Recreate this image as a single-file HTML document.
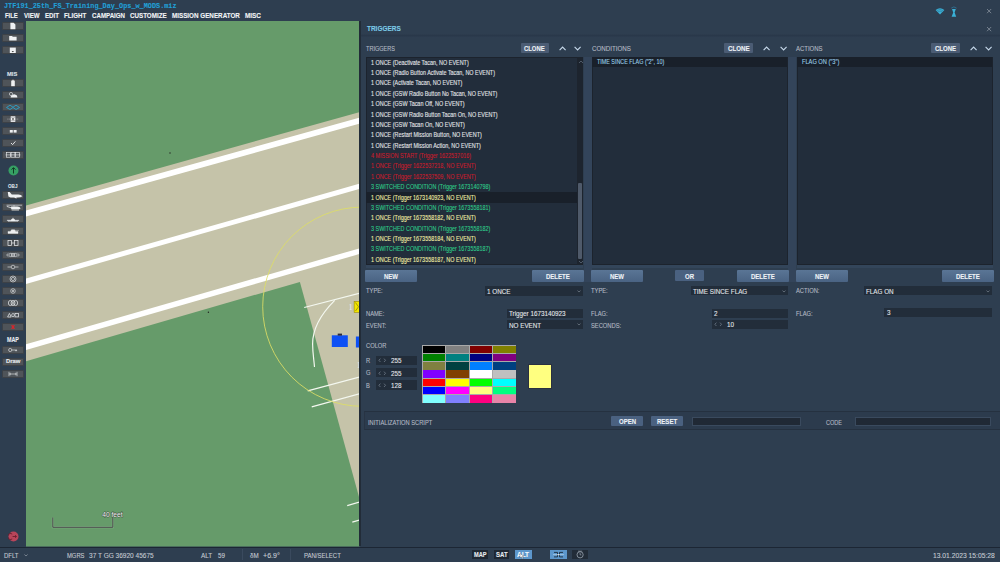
<!DOCTYPE html><html><head><meta charset="utf-8"><style>
html,body{margin:0;padding:0;width:1000px;height:562px;overflow:hidden;background:#2e3e50}
.t{position:absolute;white-space:nowrap;line-height:1;transform-origin:0 0;-webkit-text-stroke:0.1px currentColor}
.b{position:absolute;box-sizing:border-box}
</style></head><body>
<div class="b" style="left:0.00px;top:0.00px;width:1000.00px;height:562.00px;background:#2e3e50;"></div>
<div class="t" style="left:3.60px;top:2.21px;font-size:7.879px;color:#22a0d8;font-family:'Liberation Mono',monospace;transform:scaleX(0.8712);font-weight:bold;">JTF191_25th_FS_Training_Day_Ops_w_MODS.miz</div>
<div class="t" style="left:5.40px;top:12.50px;font-size:6.857px;color:#f2f4f6;font-family:'Liberation Sans',sans-serif;font-weight:bold;transform:scaleX(0.8616);">FILE</div>
<div class="t" style="left:23.60px;top:12.50px;font-size:6.857px;color:#f2f4f6;font-family:'Liberation Sans',sans-serif;font-weight:bold;transform:scaleX(0.8902);">VIEW</div>
<div class="t" style="left:44.60px;top:12.50px;font-size:6.857px;color:#f2f4f6;font-family:'Liberation Sans',sans-serif;font-weight:bold;transform:scaleX(0.9027);">EDIT</div>
<div class="t" style="left:64.10px;top:12.50px;font-size:6.857px;color:#f2f4f6;font-family:'Liberation Sans',sans-serif;font-weight:bold;transform:scaleX(0.9008);">FLIGHT</div>
<div class="t" style="left:91.80px;top:12.50px;font-size:6.857px;color:#f2f4f6;font-family:'Liberation Sans',sans-serif;font-weight:bold;transform:scaleX(0.8989);">CAMPAIGN</div>
<div class="t" style="left:130.30px;top:12.50px;font-size:6.857px;color:#f2f4f6;font-family:'Liberation Sans',sans-serif;font-weight:bold;transform:scaleX(0.9116);">CUSTOMIZE</div>
<div class="t" style="left:172.00px;top:12.50px;font-size:6.857px;color:#f2f4f6;font-family:'Liberation Sans',sans-serif;font-weight:bold;transform:scaleX(0.9184);">MISSION GENERATOR</div>
<div class="t" style="left:245.00px;top:12.50px;font-size:6.857px;color:#f2f4f6;font-family:'Liberation Sans',sans-serif;font-weight:bold;transform:scaleX(0.9333);">MISC</div>
<svg class="b" style="left:0;top:0" width="1000" height="562" viewBox="0 0 1000 562">
<defs><clipPath id="mc"><rect x="26" y="21" width="333.5" height="525.6"/></clipPath></defs>
<g clip-path="url(#mc)">
<rect x="26" y="21" width="334" height="525" fill="#c5c3a9"/>
<polygon points="20,10 370,10 370,109.1 20,207.1" fill="#669b6a"/>
<polygon points="20,362.9 299.9,281.9 376.4,560 20,560" fill="#669b6a"/>
<polygon points="20,212.2 370,114.6 370,120.7 20,218.1" fill="#ffffff"/>
<polygon points="20,280.3 370,180.7 370,185.8 20,285.6" fill="#ffffff"/>
<polygon points="20,346.0 370,245.3 370,251.0 20,351.6" fill="#ffffff"/>
<g stroke="#f4f8f0" stroke-width="1.2" fill="none">
<line x1="304.2" y1="307.5" x2="362" y2="292.5"/>
<line x1="307.7" y1="390.8" x2="362" y2="376.4"/>
<line x1="311.7" y1="406.8" x2="362" y2="393"/>
<line x1="347.2" y1="505.6" x2="362" y2="501.3"/>
<line x1="352.3" y1="522.2" x2="362" y2="519.4"/>
<path d="M334.7,300.3 C322,313 312.5,328 312.6,344 C312.7,354 314,360 314.5,367"/>
</g>
<circle cx="362.3" cy="306.7" r="99.6" fill="none" stroke="#dede66" stroke-width="0.85"/>
<rect x="331.8" y="335.3" width="16" height="11.7" fill="#0d50f5"/>
<rect x="337.7" y="333.6" width="4.3" height="2" fill="#2a2a40"/>
<rect x="355.9" y="336.5" width="8" height="11" fill="#0d50f5"/>
<rect x="354.1" y="301.3" width="8" height="11.1" fill="#f2e600" stroke="#8a7a00" stroke-width="0.5"/>
<path d="M355.5,302.5 L358.5,306.8 L355.5,311" stroke="#5a5000" stroke-width="0.5" fill="none"/>
<text x="348.8" y="310.2" font-family="Liberation Serif" font-size="7.2" fill="#f0f0f0">1</text>
<text x="357" y="367.8" font-family="Liberation Serif" font-size="7.2" fill="#f0f0f0">1</text>
<circle cx="170" cy="153" r="0.7" fill="#222"/>
<circle cx="208.4" cy="312.3" r="0.7" fill="#222"/>
<path d="M52.8,517.5 V527.3 H112.8 V517.5" fill="none" stroke="#7fae84" stroke-width="2"/><path d="M52.8,517.5 V527.3 H112.8 V517.5" fill="none" stroke="#4c4c4c" stroke-width="1"/>
<text x="102.2" y="516.6" font-family="Liberation Sans" font-size="6.3" fill="#f4f4f4" stroke="#3a4a3a" stroke-width="0.8" paint-order="stroke" textLength="20.5" lengthAdjust="spacingAndGlyphs">40 feet</text>
</g></svg>
<div class="b" style="left:2.00px;top:21.50px;width:22.00px;height:8.00px;background:#4f5459;border-radius:1px;border:0.5px solid #3d4146;"></div>
<svg class="b" style="left:2px;top:21.5px" width="22" height="8" viewBox="0 0 22 8"><path d="M8.4,0.7 H11.6 L13.4,2.5 V7.2 H8.4 Z" fill="#eef0f2"/></svg>
<div class="b" style="left:2.00px;top:33.50px;width:22.00px;height:8.00px;background:#4f5459;border-radius:1px;border:0.5px solid #3d4146;"></div>
<svg class="b" style="left:2px;top:33.5px" width="22" height="8" viewBox="0 0 22 8"><path d="M7.2,2 H10 L10.8,2.8 H14.6 V6.5 H7.2 Z" fill="#eef0f2"/></svg>
<div class="b" style="left:2.00px;top:45.50px;width:22.00px;height:8.00px;background:#4f5459;border-radius:1px;border:0.5px solid #3d4146;"></div>
<svg class="b" style="left:2px;top:45.5px" width="22" height="8" viewBox="0 0 22 8"><path d="M7.8,1.6 H13.8 V7 H7.8 Z" fill="#eef0f2"/><path d="M9.6,5 H12 L10.8,6.3 Z" fill="#333"/></svg>
<div class="t" style="left:7.00px;top:71.89px;font-size:5.714px;color:#dde2e8;font-family:'Liberation Sans',sans-serif;font-weight:bold;transform:scaleX(1.0138);">MIS</div>
<div class="b" style="left:2.00px;top:78.80px;width:22.00px;height:8.00px;background:#4f5459;border-radius:1px;border:0.5px solid #3d4146;"></div>
<svg class="b" style="left:2px;top:78.8px" width="22" height="8" viewBox="0 0 22 8"><path d="M9.2,1.6 H12.8 V7.2 H9.2 Z" fill="#eef0f2"/><rect x="10.2" y="0.8" width="1.6" height="1" fill="#eef0f2"/></svg>
<div class="b" style="left:2.00px;top:90.80px;width:22.00px;height:8.00px;background:#4f5459;border-radius:1px;border:0.5px solid #3d4146;"></div>
<svg class="b" style="left:2px;top:90.8px" width="22" height="8" viewBox="0 0 22 8"><circle cx="9" cy="3" r="1.6" fill="none" stroke="#eef0f2" stroke-width="0.6"/><path d="M8.6,6.6 Q8.4,4.2 10.6,4 Q12,2.4 13.6,3.8 Q15.4,3.8 15.4,6.6 Z" fill="#eef0f2"/></svg>
<div class="b" style="left:2.00px;top:102.80px;width:22.00px;height:8.00px;background:#4f5459;border-radius:1px;border:0.5px solid #3d4146;"></div>
<svg class="b" style="left:2px;top:102.8px" width="22" height="8" viewBox="0 0 22 8"><path d="M4.5,4.5 L8,2.2 L11,4.2 L14,2.2 L17.5,4.5 L14,6.5 L11,4.5 L8,6.5 Z" fill="none" stroke="#2aa0c8" stroke-width="0.9"/></svg>
<div class="b" style="left:2.00px;top:114.80px;width:22.00px;height:8.00px;background:#4f5459;border-radius:1px;border:0.5px solid #3d4146;"></div>
<svg class="b" style="left:2px;top:114.8px" width="22" height="8" viewBox="0 0 22 8"><rect x="8.7" y="1.3" width="4.6" height="5.6" fill="#eef0f2"/><path d="M9.8,2.3 L12.2,5.9 M12.2,2.3 L9.8,5.9" stroke="#333" stroke-width="0.6"/><path d="M5.5,4.1 H8.5 M13.5,4.1 H16.5" stroke="#eef0f2" stroke-width="0.5" stroke-dasharray="0.8 0.6"/></svg>
<div class="b" style="left:2.00px;top:126.80px;width:22.00px;height:8.00px;background:#4f5459;border-radius:1px;border:0.5px solid #3d4146;"></div>
<svg class="b" style="left:2px;top:126.8px" width="22" height="8" viewBox="0 0 22 8"><rect x="7.8" y="3" width="3" height="2.6" fill="#eef0f2"/><rect x="11.6" y="3" width="3" height="2.6" fill="#eef0f2"/></svg>
<div class="b" style="left:2.00px;top:138.80px;width:22.00px;height:8.00px;background:#4f5459;border-radius:1px;border:0.5px solid #3d4146;"></div>
<svg class="b" style="left:2px;top:138.8px" width="22" height="8" viewBox="0 0 22 8"><path d="M9,4 L10.6,5.6 L13.4,2.4" fill="none" stroke="#eef0f2" stroke-width="0.9"/></svg>
<div class="b" style="left:2.00px;top:150.80px;width:22.00px;height:8.00px;background:#4f5459;border-radius:1px;border:0.5px solid #3d4146;"></div>
<svg class="b" style="left:2px;top:150.8px" width="22" height="8" viewBox="0 0 22 8"><g fill="none" stroke="#eef0f2" stroke-width="0.6"><rect x="4.6" y="1.6" width="3.8" height="4.6"/><rect x="9.1" y="1.6" width="3.8" height="4.6"/><rect x="13.6" y="1.6" width="3.8" height="4.6"/><path d="M3.6,3.9 H18.4"/></g></svg>
<svg class="b" style="left:7.5px;top:165.2px" width="11" height="11" viewBox="0 0 11 11"><circle cx="5.5" cy="5.5" r="5" fill="#36a064"/><path d="M5.5,8.5 V3 M3.6,4.6 L5.5,2.6 L7.4,4.6" stroke="#0f3a22" stroke-width="1" fill="none"/></svg>
<div class="t" style="left:8.00px;top:182.64px;font-size:6.000px;color:#dde2e8;font-family:'Liberation Sans',sans-serif;font-weight:bold;transform:scaleX(0.7700);">OBJ</div>
<div class="b" style="left:2.00px;top:191.00px;width:22.00px;height:8.00px;background:#4f5459;border-radius:1px;border:0.5px solid #3d4146;"></div>
<svg class="b" style="left:2px;top:191px" width="22" height="8" viewBox="0 0 22 8"><path d="M5.8,0.9 H7.6 L9.8,3.6 H16.4 Q19.2,4 20.4,5.2 Q18.8,6.4 15.4,6.4 H8.6 L6.4,5.6 Z" fill="#eef0f2"/><path d="M11,5.2 L13.6,7.2 H15 L13.6,5.2 Z" fill="#eef0f2"/></svg>
<div class="b" style="left:2.00px;top:203.00px;width:22.00px;height:8.00px;background:#4f5459;border-radius:1px;border:0.5px solid #3d4146;"></div>
<svg class="b" style="left:2px;top:203px" width="22" height="8" viewBox="0 0 22 8"><path d="M4.6,2.2 H20" stroke="#eef0f2" stroke-width="0.6"/><path d="M12,2.2 V3.6" stroke="#eef0f2" stroke-width="0.6"/><path d="M9.2,3.6 H15.4 Q18,3.8 18.6,5.4 Q17.2,6.6 14.2,6.6 H9.6 Q8.4,5 9.2,3.6 Z" fill="#eef0f2"/><path d="M4.8,3.4 L9.2,4.8" stroke="#eef0f2" stroke-width="0.8"/><path d="M9.6,7.3 H17" stroke="#eef0f2" stroke-width="0.5"/></svg>
<div class="b" style="left:2.00px;top:215.00px;width:22.00px;height:8.00px;background:#4f5459;border-radius:1px;border:0.5px solid #3d4146;"></div>
<svg class="b" style="left:2px;top:215px" width="22" height="8" viewBox="0 0 22 8"><path d="M5,5.2 H17 L16,6.2 H6 Z M9,5.2 L10,3.8 H12 L13,5.2 Z M11,3.8 V2.6" stroke="#eef0f2" stroke-width="0.4" fill="#eef0f2"/></svg>
<div class="b" style="left:2.00px;top:227.00px;width:22.00px;height:8.00px;background:#4f5459;border-radius:1px;border:0.5px solid #3d4146;"></div>
<svg class="b" style="left:2px;top:227px" width="22" height="8" viewBox="0 0 22 8"><path d="M6,4.4 H16 V6.4 H6 Z M8.6,4.4 L9.5,2.8 H12.6 L13.4,4.4 Z M12.6,3.4 H17" stroke="#eef0f2" stroke-width="0.4" fill="#eef0f2"/></svg>
<div class="b" style="left:2.00px;top:239.00px;width:22.00px;height:8.00px;background:#4f5459;border-radius:1px;border:0.5px solid #3d4146;"></div>
<svg class="b" style="left:2px;top:239px" width="22" height="8" viewBox="0 0 22 8"><g fill="none" stroke="#eef0f2" stroke-width="0.7"><rect x="6" y="1.5" width="3.6" height="5"/><rect x="12.4" y="1.5" width="3.6" height="5"/><path d="M9.6,4 H12.4"/></g></svg>
<div class="b" style="left:2.00px;top:251.00px;width:22.00px;height:8.00px;background:#4f5459;border-radius:1px;border:0.5px solid #3d4146;"></div>
<svg class="b" style="left:2px;top:251px" width="22" height="8" viewBox="0 0 22 8"><g fill="none" stroke="#eef0f2" stroke-width="0.6"><path d="M4.6,4 L6.4,2.4 M4.6,4 L6.4,5.6 M17.4,4 L15.6,2.4 M17.4,4 L15.6,5.6"/><ellipse cx="8.6" cy="4" rx="1.8" ry="1.6"/><ellipse cx="11" cy="4" rx="1.8" ry="1.6"/><ellipse cx="13.4" cy="4" rx="1.8" ry="1.6"/></g></svg>
<div class="b" style="left:2.00px;top:263.00px;width:22.00px;height:8.00px;background:#4f5459;border-radius:1px;border:0.5px solid #3d4146;"></div>
<svg class="b" style="left:2px;top:263px" width="22" height="8" viewBox="0 0 22 8"><g fill="none" stroke="#eef0f2" stroke-width="0.6"><path d="M5.5,4 H9 M13,4 H16.5"/><circle cx="11" cy="4" r="1.8"/></g></svg>
<div class="b" style="left:2.00px;top:275.00px;width:22.00px;height:8.00px;background:#4f5459;border-radius:1px;border:0.5px solid #3d4146;"></div>
<svg class="b" style="left:2px;top:275px" width="22" height="8" viewBox="0 0 22 8"><g fill="none" stroke="#eef0f2" stroke-width="0.6"><circle cx="11" cy="4" r="3"/><circle cx="11" cy="4" r="1.6"/></g></svg>
<div class="b" style="left:2.00px;top:287.00px;width:22.00px;height:8.00px;background:#4f5459;border-radius:1px;border:0.5px solid #3d4146;"></div>
<svg class="b" style="left:2px;top:287px" width="22" height="8" viewBox="0 0 22 8"><g fill="none" stroke="#eef0f2" stroke-width="0.6"><circle cx="11" cy="4" r="2.3"/><path d="M10,3 L12,5 M12,3 L10,5"/></g></svg>
<div class="b" style="left:2.00px;top:299.00px;width:22.00px;height:8.00px;background:#4f5459;border-radius:1px;border:0.5px solid #3d4146;"></div>
<svg class="b" style="left:2px;top:299px" width="22" height="8" viewBox="0 0 22 8"><g fill="none" stroke="#eef0f2" stroke-width="0.7"><ellipse cx="8.4" cy="4" rx="2" ry="2.6"/><ellipse cx="11" cy="4" rx="2" ry="2.6"/><ellipse cx="13.6" cy="4" rx="2" ry="2.6"/></g></svg>
<div class="b" style="left:2.00px;top:311.00px;width:22.00px;height:8.00px;background:#4f5459;border-radius:1px;border:0.5px solid #3d4146;"></div>
<svg class="b" style="left:2px;top:311px" width="22" height="8" viewBox="0 0 22 8"><g fill="none" stroke="#eef0f2" stroke-width="0.7"><path d="M5.6,6 L7.4,2.4 L9.2,6 Z"/><path d="M11,2.2 L12.6,4.1 L11,6 L9.4,4.1 Z"/><rect x="13" y="2.5" width="3.4" height="3.4"/></g></svg>
<div class="b" style="left:2.00px;top:323.00px;width:22.00px;height:8.00px;background:#4f5459;border-radius:1px;border:0.5px solid #3d4146;"></div>
<svg class="b" style="left:2px;top:323px" width="22" height="8" viewBox="0 0 22 8"><path d="M9.6,2.2 L12.4,5.8 M12.4,2.2 L9.6,5.8" stroke="#d8262c" stroke-width="1.3"/></svg>
<div class="t" style="left:7.00px;top:337.49px;font-size:6.286px;color:#e8ecf0;font-family:'Liberation Sans',sans-serif;font-weight:bold;transform:scaleX(0.8591);">MAP</div>
<div class="b" style="left:2.00px;top:345.50px;width:22.00px;height:8.00px;background:#4f5459;border-radius:1px;border:0.5px solid #3d4146;"></div>
<svg class="b" style="left:2px;top:345.5px" width="22" height="8" viewBox="0 0 22 8"><g fill="none" stroke="#eef0f2" stroke-width="0.6"><circle cx="8.2" cy="4" r="1.6"/><path d="M9.8,4 H15 M13.6,4 V5.2 M14.6,4 V5.2"/></g></svg>
<div class="b" style="left:2.00px;top:357.50px;width:22.00px;height:8.00px;background:#4f5459;border-radius:1px;border:0.5px solid #3d4146;"></div>
<div class="b" style="left:2.00px;top:369.50px;width:22.00px;height:8.00px;background:#4f5459;border-radius:1px;border:0.5px solid #3d4146;"></div>
<svg class="b" style="left:2px;top:369.5px" width="22" height="8" viewBox="0 0 22 8"><g fill="none" stroke="#eef0f2" stroke-width="0.6"><path d="M7,1.8 V6.2 M15,1.8 V6.2 M7.6,4 H14.4 M8.8,3 L7.6,4 L8.8,5 M13.2,3 L14.4,4 L13.2,5"/></g></svg>
<div class="t" style="left:5.80px;top:358.69px;font-size:5.714px;color:#e8ecf0;font-family:'Liberation Sans',sans-serif;font-weight:bold;transform:scaleX(1.0305);">Draw</div>
<svg class="b" style="left:7.5px;top:530.5px" width="11" height="11" viewBox="0 0 11 11"><circle cx="5.5" cy="5.5" r="5" fill="#b8455a"/><path d="M4.2,3 A3,3 0 1 0 4.2,8 M4.6,5.5 H8.4 M7,4.2 L8.4,5.5 L7,6.8" stroke="#6a1d2c" stroke-width="0.9" fill="none"/></svg>
<div class="b" style="left:0.00px;top:546.60px;width:1000.00px;height:15.40px;background:#2e3e50;border-top:1.2px solid #1c2634;"></div>
<div class="t" style="left:4.20px;top:551.68px;font-size:7.000px;color:#c4cad2;font-family:'Liberation Sans',sans-serif;transform:scaleX(0.8539);">DFLT</div>
<div class="t" style="left:66.50px;top:551.68px;font-size:7.000px;color:#c4cad2;font-family:'Liberation Sans',sans-serif;transform:scaleX(0.8333);">MGRS</div>
<div class="t" style="left:88.60px;top:551.68px;font-size:7.000px;color:#c4cad2;font-family:'Liberation Sans',sans-serif;transform:scaleX(0.9321);">37 T GG 36920 45675</div>
<div class="t" style="left:200.60px;top:551.68px;font-size:7.000px;color:#c4cad2;font-family:'Liberation Sans',sans-serif;transform:scaleX(0.9092);">ALT</div>
<div class="t" style="left:218.00px;top:551.68px;font-size:7.000px;color:#c4cad2;font-family:'Liberation Sans',sans-serif;transform:scaleX(0.8990);">59</div>
<div class="t" style="left:250.30px;top:551.68px;font-size:7.000px;color:#c4cad2;font-family:'Liberation Sans',sans-serif;transform:scaleX(0.8943);">δM</div>
<div class="t" style="left:263.20px;top:551.68px;font-size:7.000px;color:#c4cad2;font-family:'Liberation Sans',sans-serif;transform:scaleX(1.0109);">+6.9°</div>
<div class="t" style="left:303.80px;top:551.68px;font-size:7.000px;color:#c4cad2;font-family:'Liberation Sans',sans-serif;transform:scaleX(0.8548);">PAN/SELECT</div>
<div class="t" style="left:933.20px;top:551.68px;font-size:7.000px;color:#c4cad2;font-family:'Liberation Sans',sans-serif;transform:scaleX(0.9622);">13.01.2023 15:05:28</div>
<svg class="b" style="left:23.5px;top:553.5px" width="4" height="3"><path d="M0.4,0.5 L2,2 L3.6,0.5" stroke="#a8b0ba" stroke-width="0.6" fill="none"/></svg>
<div class="b" style="left:242.00px;top:549.00px;width:0.70px;height:11.00px;background:#3a4a5e;"></div>
<div class="b" style="left:290.30px;top:549.00px;width:0.70px;height:11.00px;background:#3a4a5e;"></div>
<div class="b" style="left:472.00px;top:549.70px;width:15.80px;height:9.30px;background:#1f2833;"></div>
<div class="t" style="left:473.80px;top:551.53px;font-size:6.714px;color:#e8ecf0;font-family:'Liberation Sans',sans-serif;font-weight:bold;transform:scaleX(0.8445);">MAP</div>
<div class="b" style="left:493.90px;top:549.70px;width:14.80px;height:9.30px;background:#1f2833;"></div>
<div class="t" style="left:495.60px;top:551.53px;font-size:6.714px;color:#e8ecf0;font-family:'Liberation Sans',sans-serif;font-weight:bold;transform:scaleX(0.8971);">SAT</div>
<div class="b" style="left:515.00px;top:549.70px;width:16.60px;height:9.30px;background:#5d97cc;"></div>
<div class="t" style="left:517.40px;top:551.53px;font-size:6.714px;color:#f4f8fc;font-family:'Liberation Sans',sans-serif;font-weight:bold;transform:scaleX(0.9559);">ALT</div>
<svg class="b" style="left:519px;top:553px" width="6" height="6"><path d="M1,0.5 L1,5 L2.2,3.8 L3.4,5.8 L4.2,5.4 L3.2,3.4 L4.8,3.2 Z" fill="#fff" stroke="#222" stroke-width="0.3"/></svg>
<div class="b" style="left:549.50px;top:549.70px;width:17.00px;height:9.30px;background:#5d97cc;"></div>
<svg class="b" style="left:549.5px;top:549.7px" width="17" height="9.3" viewBox="0 0 17 9.3"><path d="M4,2.4 H7.5 V6.9 H4 M13,2.4 H9.5 V6.9 H13" stroke="#1a2a3a" stroke-width="0.9" fill="none"/><path d="M7.5,4.65 H9.5" stroke="#fff" stroke-width="0.8"/><path d="M3,4.65 H14" stroke="#e8f0f8" stroke-width="0.5"/></svg>
<div class="b" style="left:571.60px;top:549.70px;width:16.20px;height:9.30px;background:#222c38;"></div>
<svg class="b" style="left:571.6px;top:549.7px" width="16.2" height="9.3" viewBox="0 0 16.2 9.3"><circle cx="8.1" cy="4.8" r="3.1" fill="none" stroke="#aab4c0" stroke-width="0.7"/><path d="M8.1,3 V4.9 H9.4" stroke="#aab4c0" stroke-width="0.6" fill="none"/><path d="M6,1.2 H10.2" stroke="#aab4c0" stroke-width="0.6"/></svg>
<div class="b" style="left:359.00px;top:21.00px;width:641.00px;height:525.00px;background:#2e3e50;"></div>
<div class="b" style="left:359.40px;top:21.00px;width:1.30px;height:525.00px;background:#222c38;"></div>
<div class="t" style="left:367.20px;top:25.41px;font-size:7.429px;color:#7ccbe8;font-family:'Liberation Sans',sans-serif;font-weight:bold;transform:scaleX(0.8712);">TRIGGERS</div>
<div class="b" style="left:361.00px;top:34.20px;width:639.00px;height:4.30px;background:linear-gradient(#2e3d4f,#29384a 40%,#2f3f52);"></div>
<svg class="b" style="left:985.6px;top:8.0px" width="6.2" height="6.2"><path d="M1,1 L5.2,5.2 M5.2,1 L1,5.2" stroke="#8c96a2" stroke-width="0.75"/></svg>
<svg class="b" style="left:986.1999999999999px;top:25.599999999999998px" width="6.2" height="6.2"><path d="M1,1 L5.2,5.2 M5.2,1 L1,5.2" stroke="#8c96a2" stroke-width="0.75"/></svg>
<div class="t" style="left:365.50px;top:45.55px;font-size:6.571px;color:#b4bac4;font-family:'Liberation Sans',sans-serif;transform:scaleX(0.8450);">TRIGGERS</div>
<div class="b" style="left:520.50px;top:43.30px;width:28.50px;height:10.20px;background:#4b5c74;border-radius:1px;"></div>
<div class="t" style="left:524.30px;top:45.66px;font-size:7.143px;color:#eef2f6;font-family:'Liberation Sans',sans-serif;font-weight:bold;transform:scaleX(0.8280);">CLONE</div>
<svg class="b" style="left:559px;top:46px" width="8" height="5"><path d="M0.6,4.2 L3.6,1 L6.6,4.2" stroke="#c6d8ea" stroke-width="1.1" fill="none"/></svg>
<svg class="b" style="left:574px;top:46px" width="8" height="5"><path d="M0.6,0.8 L3.6,4 L6.6,0.8" stroke="#c6d8ea" stroke-width="1.1" fill="none"/></svg>
<div class="t" style="left:592.00px;top:45.55px;font-size:6.571px;color:#b4bac4;font-family:'Liberation Sans',sans-serif;transform:scaleX(0.9453);">CONDITIONS</div>
<div class="b" style="left:724.00px;top:43.30px;width:29.40px;height:10.20px;background:#4b5c74;border-radius:1px;"></div>
<div class="t" style="left:727.80px;top:45.66px;font-size:7.143px;color:#eef2f6;font-family:'Liberation Sans',sans-serif;font-weight:bold;transform:scaleX(0.8640);">CLONE</div>
<svg class="b" style="left:763.4px;top:46px" width="8" height="5"><path d="M0.6,4.2 L3.6,1 L6.6,4.2" stroke="#c6d8ea" stroke-width="1.1" fill="none"/></svg>
<svg class="b" style="left:779.8px;top:46px" width="8" height="5"><path d="M0.6,0.8 L3.6,4 L6.6,0.8" stroke="#c6d8ea" stroke-width="1.1" fill="none"/></svg>
<div class="t" style="left:796.00px;top:45.55px;font-size:6.571px;color:#b4bac4;font-family:'Liberation Sans',sans-serif;transform:scaleX(0.9072);">ACTIONS</div>
<div class="b" style="left:930.70px;top:43.30px;width:29.00px;height:10.20px;background:#4b5c74;border-radius:1px;"></div>
<div class="t" style="left:934.50px;top:45.66px;font-size:7.143px;color:#eef2f6;font-family:'Liberation Sans',sans-serif;font-weight:bold;transform:scaleX(0.8480);">CLONE</div>
<svg class="b" style="left:970px;top:46px" width="8" height="5"><path d="M0.6,4.2 L3.6,1 L6.6,4.2" stroke="#c6d8ea" stroke-width="1.1" fill="none"/></svg>
<svg class="b" style="left:985px;top:46px" width="8" height="5"><path d="M0.6,0.8 L3.6,4 L6.6,0.8" stroke="#c6d8ea" stroke-width="1.1" fill="none"/></svg>
<div class="b" style="left:583.50px;top:56.50px;width:8.30px;height:225.50px;background:#33445a;"></div>
<div class="b" style="left:788.00px;top:56.50px;width:8.00px;height:225.50px;background:#33445a;"></div>
<div class="b" style="left:365.50px;top:56.70px;width:217.80px;height:208.10px;background:#222d3b;border:0.6px solid #1c232d;"></div>
<div class="b" style="left:591.80px;top:56.70px;width:196.00px;height:208.10px;background:#222d3b;border:0.6px solid #1c232d;"></div>
<div class="b" style="left:796.50px;top:56.70px;width:196.50px;height:208.10px;background:#222d3b;border:0.6px solid #1c232d;"></div>
<div class="b" style="left:365.50px;top:264.80px;width:217.80px;height:2.80px;background:#33455a;"></div>
<div class="b" style="left:591.80px;top:264.80px;width:196.00px;height:2.80px;background:#33455a;"></div>
<div class="b" style="left:796.50px;top:264.80px;width:196.50px;height:2.80px;background:#33455a;"></div>
<div class="b" style="left:577.30px;top:57.00px;width:5.70px;height:207.50px;background:#1d242e;"></div>
<div class="b" style="left:577.80px;top:182.50px;width:4.40px;height:76.00px;background:#4f5a6a;border-radius:1px;"></div>
<svg class="b" style="left:577.5px;top:59.5px" width="6" height="4"><path d="M1,3 L3,1 L5,3" stroke="#5c6878" stroke-width="0.8" fill="none"/></svg>
<svg class="b" style="left:577.5px;top:259.5px" width="6" height="4"><path d="M1,1 L3,3 L5,1" stroke="#5c6878" stroke-width="0.8" fill="none"/></svg>
<div class="t" style="left:371.20px;top:59.69px;font-size:6.286px;color:#e4e6ea;font-family:'Liberation Sans',sans-serif;transform:scaleX(0.8668);">1 ONCE (Deactivate Tacan, NO EVENT)</div>
<div class="t" style="left:371.20px;top:70.06px;font-size:6.286px;color:#e4e6ea;font-family:'Liberation Sans',sans-serif;transform:scaleX(0.8668);">1 ONCE (Radio Button Activate Tacan, NO EVENT)</div>
<div class="t" style="left:371.20px;top:80.43px;font-size:6.286px;color:#e4e6ea;font-family:'Liberation Sans',sans-serif;transform:scaleX(0.8668);">1 ONCE (Activate Tacan, NO EVENT)</div>
<div class="t" style="left:371.20px;top:90.80px;font-size:6.286px;color:#e4e6ea;font-family:'Liberation Sans',sans-serif;transform:scaleX(0.8668);">1 ONCE (GSW Radio Button No Tacan, NO EVENT)</div>
<div class="t" style="left:371.20px;top:101.17px;font-size:6.286px;color:#e4e6ea;font-family:'Liberation Sans',sans-serif;transform:scaleX(0.8668);">1 ONCE (GSW Tacan Off, NO EVENT)</div>
<div class="t" style="left:371.20px;top:111.54px;font-size:6.286px;color:#e4e6ea;font-family:'Liberation Sans',sans-serif;transform:scaleX(0.8668);">1 ONCE (GSW Radio Button Tacan On, NO EVENT)</div>
<div class="t" style="left:371.20px;top:121.91px;font-size:6.286px;color:#e4e6ea;font-family:'Liberation Sans',sans-serif;transform:scaleX(0.8668);">1 ONCE (GSW Tacan On, NO EVENT)</div>
<div class="t" style="left:371.20px;top:132.28px;font-size:6.286px;color:#e4e6ea;font-family:'Liberation Sans',sans-serif;transform:scaleX(0.8668);">1 ONCE (Restart Mission Button, NO EVENT)</div>
<div class="t" style="left:371.20px;top:142.65px;font-size:6.286px;color:#e4e6ea;font-family:'Liberation Sans',sans-serif;transform:scaleX(0.8668);">1 ONCE (Restart Mission Action, NO EVENT)</div>
<div class="t" style="left:371.20px;top:153.02px;font-size:6.286px;color:#c81c2c;font-family:'Liberation Sans',sans-serif;transform:scaleX(0.8668);">4 MISSION START (Trigger 1622537016)</div>
<div class="t" style="left:371.20px;top:163.39px;font-size:6.286px;color:#c81c2c;font-family:'Liberation Sans',sans-serif;transform:scaleX(0.8668);">1 ONCE (Trigger 1622537218, NO EVENT)</div>
<div class="t" style="left:371.20px;top:173.76px;font-size:6.286px;color:#c81c2c;font-family:'Liberation Sans',sans-serif;transform:scaleX(0.8668);">1 ONCE (Trigger 1622537509, NO EVENT)</div>
<div class="t" style="left:371.20px;top:184.13px;font-size:6.286px;color:#2fcb8a;font-family:'Liberation Sans',sans-serif;transform:scaleX(0.8668);">3 SWITCHED CONDITION (Trigger 1673140798)</div>
<div class="b" style="left:366.00px;top:192.41px;width:211.00px;height:10.30px;background:#19202a;"></div>
<div class="t" style="left:371.20px;top:194.50px;font-size:6.286px;color:#f3efa6;font-family:'Liberation Sans',sans-serif;transform:scaleX(0.8668);">1 ONCE (Trigger 1673140923, NO EVENT)</div>
<div class="t" style="left:371.20px;top:204.87px;font-size:6.286px;color:#2fcb8a;font-family:'Liberation Sans',sans-serif;transform:scaleX(0.8668);">3 SWITCHED CONDITION (Trigger 1673558181)</div>
<div class="t" style="left:371.20px;top:215.24px;font-size:6.286px;color:#f3efa6;font-family:'Liberation Sans',sans-serif;transform:scaleX(0.8668);">1 ONCE (Trigger 1673558182, NO EVENT)</div>
<div class="t" style="left:371.20px;top:225.61px;font-size:6.286px;color:#2fcb8a;font-family:'Liberation Sans',sans-serif;transform:scaleX(0.8668);">3 SWITCHED CONDITION (Trigger 1673558182)</div>
<div class="t" style="left:371.20px;top:235.98px;font-size:6.286px;color:#f3efa6;font-family:'Liberation Sans',sans-serif;transform:scaleX(0.8668);">1 ONCE (Trigger 1673558184, NO EVENT)</div>
<div class="t" style="left:371.20px;top:246.35px;font-size:6.286px;color:#2fcb8a;font-family:'Liberation Sans',sans-serif;transform:scaleX(0.8668);">3 SWITCHED CONDITION (Trigger 1673558187)</div>
<div class="t" style="left:371.20px;top:256.72px;font-size:6.286px;color:#f3efa6;font-family:'Liberation Sans',sans-serif;transform:scaleX(0.8668);">1 ONCE (Trigger 1673558187, NO EVENT)</div>
<div class="b" style="left:591.60px;top:57.20px;width:195.60px;height:9.80px;background:#19202a;"></div>
<div class="t" style="left:596.50px;top:59.29px;font-size:6.286px;color:#9ccfe6;font-family:'Liberation Sans',sans-serif;transform:scaleX(0.8597);">TIME SINCE FLAG ("2", 10)</div>
<div class="b" style="left:797.10px;top:57.20px;width:195.30px;height:9.80px;background:#19202a;"></div>
<div class="t" style="left:801.50px;top:59.29px;font-size:6.286px;color:#9ccfe6;font-family:'Liberation Sans',sans-serif;transform:scaleX(0.9040);">FLAG ON ("3")</div>
<div class="b" style="left:365.00px;top:269.50px;width:52.00px;height:12.50px;background:linear-gradient(#5a7595,#4a6383);border-radius:1px;"></div>
<div class="t" style="left:383.98px;top:272.73px;font-size:7.000px;color:#eef2f6;font-family:'Liberation Sans',sans-serif;font-weight:bold;transform:scaleX(0.8600);">NEW</div>
<div class="b" style="left:532.00px;top:269.50px;width:52.00px;height:12.50px;background:linear-gradient(#5a7595,#4a6383);border-radius:1px;"></div>
<div class="t" style="left:546.13px;top:272.73px;font-size:7.000px;color:#eef2f6;font-family:'Liberation Sans',sans-serif;font-weight:bold;transform:scaleX(0.8600);">DELETE</div>
<div class="b" style="left:590.60px;top:269.50px;width:52.10px;height:12.50px;background:linear-gradient(#5a7595,#4a6383);border-radius:1px;"></div>
<div class="t" style="left:609.63px;top:272.73px;font-size:7.000px;color:#eef2f6;font-family:'Liberation Sans',sans-serif;font-weight:bold;transform:scaleX(0.8600);">NEW</div>
<div class="b" style="left:675.00px;top:270.30px;width:29.30px;height:10.60px;background:#4a6180;border-radius:1px;"></div>
<div class="t" style="left:685.13px;top:272.58px;font-size:7.000px;color:#eef2f6;font-family:'Liberation Sans',sans-serif;font-weight:bold;transform:scaleX(0.8600);">OR</div>
<div class="b" style="left:736.90px;top:269.50px;width:52.10px;height:12.50px;background:linear-gradient(#5a7595,#4a6383);border-radius:1px;"></div>
<div class="t" style="left:751.08px;top:272.73px;font-size:7.000px;color:#eef2f6;font-family:'Liberation Sans',sans-serif;font-weight:bold;transform:scaleX(0.8600);">DELETE</div>
<div class="b" style="left:796.20px;top:269.50px;width:51.60px;height:12.50px;background:linear-gradient(#5a7595,#4a6383);border-radius:1px;"></div>
<div class="t" style="left:814.98px;top:272.73px;font-size:7.000px;color:#eef2f6;font-family:'Liberation Sans',sans-serif;font-weight:bold;transform:scaleX(0.8600);">NEW</div>
<div class="b" style="left:941.50px;top:269.50px;width:52.10px;height:12.50px;background:linear-gradient(#5a7595,#4a6383);border-radius:1px;"></div>
<div class="t" style="left:955.68px;top:272.73px;font-size:7.000px;color:#eef2f6;font-family:'Liberation Sans',sans-serif;font-weight:bold;transform:scaleX(0.8600);">DELETE</div>
<div class="t" style="left:366.00px;top:288.35px;font-size:6.571px;color:#b4bac4;font-family:'Liberation Sans',sans-serif;transform:scaleX(0.8800);">TYPE:</div>
<div class="b" style="left:484.90px;top:285.70px;width:98.50px;height:10.30px;background:#222d3a;"></div>
<div class="t" style="left:487.10px;top:287.73px;font-size:7.000px;color:#e2e6ea;font-family:'Liberation Sans',sans-serif;transform:scaleX(0.9000);">1 ONCE</div>
<svg class="b" style="left:577.1999999999999px;top:289.55px" width="4" height="3"><path d="M0.5,0.6 L2,2 L3.5,0.6" stroke="#8a94a0" stroke-width="0.6" fill="none"/></svg>
<div class="t" style="left:366.00px;top:311.05px;font-size:6.571px;color:#b4bac4;font-family:'Liberation Sans',sans-serif;transform:scaleX(0.8800);">NAME:</div>
<div class="b" style="left:506.50px;top:308.50px;width:76.90px;height:9.80px;background:#222d3a;"></div>
<div class="t" style="left:508.70px;top:310.28px;font-size:7.000px;color:#e2e6ea;font-family:'Liberation Sans',sans-serif;transform:scaleX(0.9000);">Trigger 1673140923</div>
<div class="t" style="left:366.00px;top:322.85px;font-size:6.571px;color:#b4bac4;font-family:'Liberation Sans',sans-serif;transform:scaleX(0.8800);">EVENT:</div>
<div class="b" style="left:506.50px;top:320.00px;width:76.90px;height:9.40px;background:#222d3a;"></div>
<div class="t" style="left:508.70px;top:321.58px;font-size:7.000px;color:#e2e6ea;font-family:'Liberation Sans',sans-serif;transform:scaleX(0.9000);">NO EVENT</div>
<svg class="b" style="left:577.1999999999999px;top:323.4px" width="4" height="3"><path d="M0.5,0.6 L2,2 L3.5,0.6" stroke="#8a94a0" stroke-width="0.6" fill="none"/></svg>
<div class="t" style="left:591.00px;top:288.35px;font-size:6.571px;color:#b4bac4;font-family:'Liberation Sans',sans-serif;transform:scaleX(0.8800);">TYPE:</div>
<div class="b" style="left:690.70px;top:286.20px;width:97.50px;height:9.30px;background:#222d3a;"></div>
<div class="t" style="left:692.90px;top:287.73px;font-size:7.000px;color:#e2e6ea;font-family:'Liberation Sans',sans-serif;transform:scaleX(0.9000);">TIME SINCE FLAG</div>
<svg class="b" style="left:782.0px;top:289.55px" width="4" height="3"><path d="M0.5,0.6 L2,2 L3.5,0.6" stroke="#8a94a0" stroke-width="0.6" fill="none"/></svg>
<div class="t" style="left:591.00px;top:310.85px;font-size:6.571px;color:#b4bac4;font-family:'Liberation Sans',sans-serif;transform:scaleX(0.8800);">FLAG:</div>
<div class="b" style="left:712.00px;top:308.60px;width:76.40px;height:9.20px;background:#222d3a;"></div>
<div class="t" style="left:714.20px;top:310.08px;font-size:7.000px;color:#e2e6ea;font-family:'Liberation Sans',sans-serif;transform:scaleX(0.9000);">2</div>
<div class="t" style="left:591.00px;top:322.65px;font-size:6.571px;color:#b4bac4;font-family:'Liberation Sans',sans-serif;transform:scaleX(0.8800);">SECONDS:</div>
<div class="b" style="left:712.00px;top:320.00px;width:76.40px;height:9.00px;background:#222d3a;"></div>
<svg class="b" style="left:713.6px;top:322.3px" width="10" height="5"><path d="M2.4,0.6 L0.9,2.3 L2.4,4 M6,0.6 L7.5,2.3 L6,4" stroke="#8a96a4" stroke-width="0.6" fill="none"/></svg>
<div class="t" style="left:726.60px;top:321.38px;font-size:7.000px;color:#e2e6ea;font-family:'Liberation Sans',sans-serif;transform:scaleX(0.9000);">10</div>
<div class="t" style="left:796.00px;top:288.35px;font-size:6.571px;color:#b4bac4;font-family:'Liberation Sans',sans-serif;transform:scaleX(0.8800);">ACTION:</div>
<div class="b" style="left:863.90px;top:286.20px;width:128.60px;height:9.30px;background:#222d3a;"></div>
<div class="t" style="left:866.10px;top:287.73px;font-size:7.000px;color:#e2e6ea;font-family:'Liberation Sans',sans-serif;transform:scaleX(0.9000);">FLAG ON</div>
<svg class="b" style="left:986.3px;top:289.55px" width="4" height="3"><path d="M0.5,0.6 L2,2 L3.5,0.6" stroke="#8a94a0" stroke-width="0.6" fill="none"/></svg>
<div class="t" style="left:796.00px;top:310.65px;font-size:6.571px;color:#b4bac4;font-family:'Liberation Sans',sans-serif;transform:scaleX(0.8800);">FLAG:</div>
<div class="b" style="left:884.30px;top:307.80px;width:108.20px;height:9.60px;background:#222d3a;"></div>
<div class="t" style="left:886.50px;top:309.48px;font-size:7.000px;color:#e2e6ea;font-family:'Liberation Sans',sans-serif;transform:scaleX(0.9000);">3</div>
<div class="t" style="left:366.00px;top:343.25px;font-size:6.571px;color:#b4bac4;font-family:'Liberation Sans',sans-serif;transform:scaleX(0.8800);">COLOR</div>
<div class="t" style="left:366.00px;top:358.05px;font-size:6.571px;color:#b4bac4;font-family:'Liberation Sans',sans-serif;transform:scaleX(0.8800);">R</div>
<div class="b" style="left:376.00px;top:355.80px;width:40.60px;height:9.20px;background:#222d3a;"></div>
<svg class="b" style="left:377.6px;top:358.2px" width="10" height="5"><path d="M2.4,0.6 L0.9,2.3 L2.4,4 M6,0.6 L7.5,2.3 L6,4" stroke="#8a96a4" stroke-width="0.6" fill="none"/></svg>
<div class="t" style="left:390.60px;top:357.28px;font-size:7.000px;color:#e2e6ea;font-family:'Liberation Sans',sans-serif;transform:scaleX(0.9000);">255</div>
<div class="t" style="left:366.00px;top:370.35px;font-size:6.571px;color:#b4bac4;font-family:'Liberation Sans',sans-serif;transform:scaleX(0.8800);">G</div>
<div class="b" style="left:376.00px;top:368.10px;width:40.60px;height:9.20px;background:#222d3a;"></div>
<svg class="b" style="left:377.6px;top:370.50000000000006px" width="10" height="5"><path d="M2.4,0.6 L0.9,2.3 L2.4,4 M6,0.6 L7.5,2.3 L6,4" stroke="#8a96a4" stroke-width="0.6" fill="none"/></svg>
<div class="t" style="left:390.60px;top:369.58px;font-size:7.000px;color:#e2e6ea;font-family:'Liberation Sans',sans-serif;transform:scaleX(0.9000);">255</div>
<div class="t" style="left:366.00px;top:382.65px;font-size:6.571px;color:#b4bac4;font-family:'Liberation Sans',sans-serif;transform:scaleX(0.8800);">B</div>
<div class="b" style="left:376.00px;top:380.40px;width:40.60px;height:9.20px;background:#222d3a;"></div>
<svg class="b" style="left:377.6px;top:382.8px" width="10" height="5"><path d="M2.4,0.6 L0.9,2.3 L2.4,4 M6,0.6 L7.5,2.3 L6,4" stroke="#8a96a4" stroke-width="0.6" fill="none"/></svg>
<div class="t" style="left:390.60px;top:381.88px;font-size:7.000px;color:#e2e6ea;font-family:'Liberation Sans',sans-serif;transform:scaleX(0.9000);">128</div>
<div class="b" style="left:422.00px;top:345.00px;width:94.20px;height:58.00px;background:#a9a9a9;"></div>
<div class="b" style="left:422.70px;top:345.60px;width:22.60px;height:7.40px;background:#000000;"></div>
<div class="b" style="left:446.20px;top:345.60px;width:22.60px;height:7.40px;background:#808080;"></div>
<div class="b" style="left:469.70px;top:345.60px;width:22.60px;height:7.40px;background:#800000;"></div>
<div class="b" style="left:493.20px;top:345.60px;width:22.60px;height:7.40px;background:#808000;"></div>
<div class="b" style="left:422.70px;top:353.87px;width:22.60px;height:7.40px;background:#008000;"></div>
<div class="b" style="left:446.20px;top:353.87px;width:22.60px;height:7.40px;background:#008080;"></div>
<div class="b" style="left:469.70px;top:353.87px;width:22.60px;height:7.40px;background:#000080;"></div>
<div class="b" style="left:493.20px;top:353.87px;width:22.60px;height:7.40px;background:#800080;"></div>
<div class="b" style="left:422.70px;top:362.14px;width:22.60px;height:7.40px;background:#808040;"></div>
<div class="b" style="left:446.20px;top:362.14px;width:22.60px;height:7.40px;background:#004040;"></div>
<div class="b" style="left:469.70px;top:362.14px;width:22.60px;height:7.40px;background:#0080ff;"></div>
<div class="b" style="left:493.20px;top:362.14px;width:22.60px;height:7.40px;background:#004080;"></div>
<div class="b" style="left:422.70px;top:370.41px;width:22.60px;height:7.40px;background:#8000ff;"></div>
<div class="b" style="left:446.20px;top:370.41px;width:22.60px;height:7.40px;background:#804000;"></div>
<div class="b" style="left:469.70px;top:370.41px;width:22.60px;height:7.40px;background:#ffffff;"></div>
<div class="b" style="left:493.20px;top:370.41px;width:22.60px;height:7.40px;background:#c0c0c0;"></div>
<div class="b" style="left:422.70px;top:378.68px;width:22.60px;height:7.40px;background:#ff0000;"></div>
<div class="b" style="left:446.20px;top:378.68px;width:22.60px;height:7.40px;background:#ffff00;"></div>
<div class="b" style="left:469.70px;top:378.68px;width:22.60px;height:7.40px;background:#00ff00;"></div>
<div class="b" style="left:493.20px;top:378.68px;width:22.60px;height:7.40px;background:#00ffff;"></div>
<div class="b" style="left:422.70px;top:386.95px;width:22.60px;height:7.40px;background:#0000ff;"></div>
<div class="b" style="left:446.20px;top:386.95px;width:22.60px;height:7.40px;background:#ff00ff;"></div>
<div class="b" style="left:469.70px;top:386.95px;width:22.60px;height:7.40px;background:#ffff80;"></div>
<div class="b" style="left:493.20px;top:386.95px;width:22.60px;height:7.40px;background:#00ff80;"></div>
<div class="b" style="left:422.70px;top:395.22px;width:22.60px;height:7.40px;background:#80ffff;"></div>
<div class="b" style="left:446.20px;top:395.22px;width:22.60px;height:7.40px;background:#8080ff;"></div>
<div class="b" style="left:469.70px;top:395.22px;width:22.60px;height:7.40px;background:#ff0080;"></div>
<div class="b" style="left:493.20px;top:395.22px;width:22.60px;height:7.40px;background:#e884a8;"></div>
<div class="b" style="left:528.20px;top:364.10px;width:23.40px;height:24.60px;background:#ffff80;border:0.6px solid #2a3040;"></div>
<div class="b" style="left:364.00px;top:411.00px;width:636.00px;height:19.00px;background:#2c3b4d;border-top:1px solid #253140;border-bottom:1px solid #253140;border-left:1px solid #283444;"></div>
<div class="t" style="left:367.60px;top:418.58px;font-size:7.000px;color:#b4bac4;font-family:'Liberation Sans',sans-serif;transform:scaleX(0.8185);">INITIALIZATION SCRIPT</div>
<div class="b" style="left:611.00px;top:416.30px;width:32.30px;height:9.70px;background:#4a6180;border-radius:1px;"></div>
<div class="t" style="left:618.62px;top:418.13px;font-size:7.000px;color:#eef2f6;font-family:'Liberation Sans',sans-serif;font-weight:bold;transform:scaleX(0.8600);">OPEN</div>
<div class="b" style="left:651.30px;top:416.30px;width:32.20px;height:9.70px;background:#4a6180;border-radius:1px;"></div>
<div class="t" style="left:657.36px;top:418.13px;font-size:7.000px;color:#eef2f6;font-family:'Liberation Sans',sans-serif;font-weight:bold;transform:scaleX(0.8600);">RESET</div>
<div class="b" style="left:691.80px;top:416.50px;width:109.20px;height:9.30px;background:#202935;border:0.6px solid #3a4a5e;"></div>
<div class="t" style="left:825.70px;top:418.58px;font-size:7.000px;color:#b4bac4;font-family:'Liberation Sans',sans-serif;transform:scaleX(0.7911);">CODE</div>
<div class="b" style="left:854.90px;top:416.50px;width:136.10px;height:9.30px;background:#202935;border:0.6px solid #3a4a5e;"></div>
<svg class="b" style="left:934px;top:6px" width="12" height="10" viewBox="0 0 12 10"><path d="M1.6,4 Q6,0.6 10.4,4 L6,8.4 Z" fill="#3ab0d6"/><path d="M2.8,4.6 Q6,2.4 9.2,4.6 M4,5.8 Q6,4.4 8,5.8" stroke="#2a6c8c" stroke-width="0.5" fill="none"/></svg>
<svg class="b" style="left:949px;top:4.5px" width="10" height="13" viewBox="0 0 10 13"><path d="M2.2,3.2 Q4.9,0.6 7.6,3.2" stroke="#2f7fa6" stroke-width="0.7" fill="none"/><path d="M3,4 H6.8 L5.6,7.6 L7.2,11.8 H2.6 L4.2,7.6 Z" fill="#3ab0d6"/></svg>
</body></html>
